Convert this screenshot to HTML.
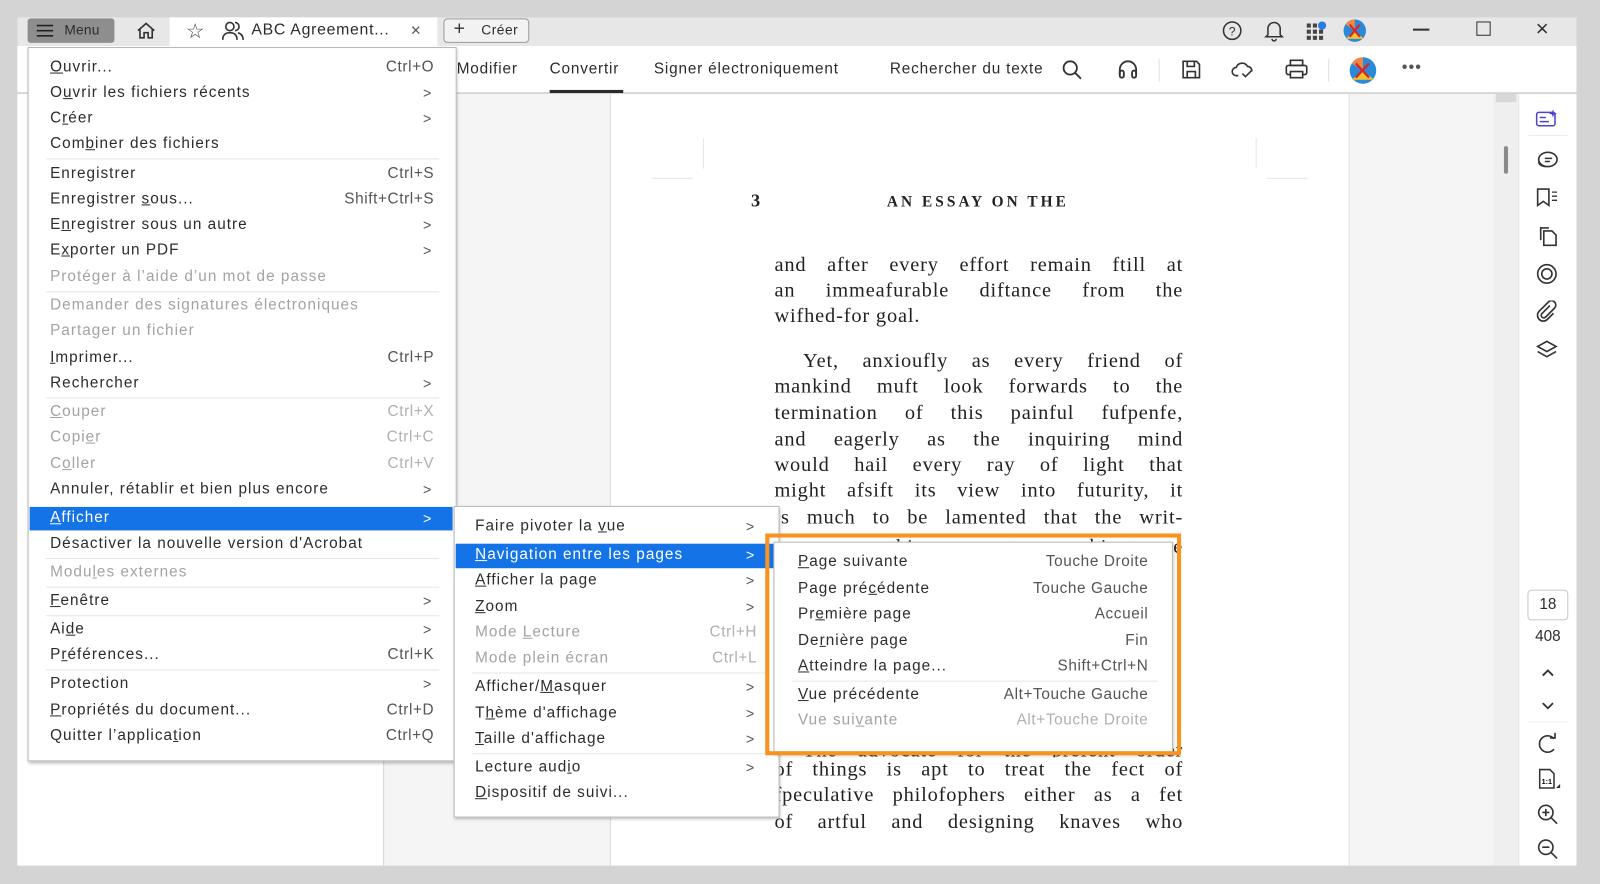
<!DOCTYPE html>
<html><head><meta charset="utf-8"><style>
*{margin:0;padding:0;box-sizing:border-box}
html,body{width:1600px;height:884px;overflow:hidden;background:#d4d4d4}
#c{position:absolute;left:0;top:0;width:1566px;height:865px;transform:scale(1.0217,1.022);transform-origin:0 0;font-family:"Liberation Sans",sans-serif;color:#2c2c2c}
.a{position:absolute}
.m{position:absolute;background:#fff;border:1px solid #b8b8b8;box-shadow:1px 2px 3px rgba(0,0,0,.25)}
.r{position:absolute;font-size:15px;line-height:20px;white-space:nowrap;letter-spacing:1px}
.d{color:#a3a3a3}
.k{position:absolute;font-size:15px;line-height:20px;white-space:nowrap;text-align:right;color:#555;letter-spacing:.6px}
.k.d{color:#b0b0b0}
.ch{position:absolute;font-size:14px;line-height:20px;color:#555}
.sep{position:absolute;height:1px;background:#e6e6e6}
.p{position:absolute;left:758px;width:400px;font-family:"Liberation Serif",serif;font-size:20px;line-height:25px;text-align:justify;text-align-last:justify;letter-spacing:.8px;color:#222;white-space:nowrap}
.ic{position:absolute}
.t{letter-spacing:.8px}
</style></head><body><div id="c">
<div class="a" style="left:17px;top:17px;width:1526px;height:28px;background:#e7e7e7"></div>
<div class="a" style="left:17px;top:45px;width:1526px;height:46px;background:#fff;border-bottom:1px solid #dcdcdc"></div>
<div class="a" style="left:17px;top:92px;width:358px;height:755px;background:#fff"></div>
<div class="a" style="left:375px;top:92px;width:223px;height:755px;background:#f5f5f5;border-left:1px solid #d8d8d8;border-right:1px solid #dedede"></div>
<div class="a" style="left:598px;top:92px;width:722px;height:755px;background:#fff"></div>
<div class="a" style="left:1320px;top:92px;width:142px;height:755px;background:#f5f5f5;border-left:1px solid #e2e2e2"></div>
<div class="a" style="left:1462px;top:92px;width:24px;height:755px;background:#efefef"></div>
<div class="a" style="left:1464px;top:92px;width:20px;height:8px;background:#d8d8d8"></div>
<div class="a" style="left:1472px;top:143px;width:4px;height:27px;background:#8a8a8a;border-radius:2px"></div>
<div class="a" style="left:1486px;top:92px;width:57px;height:755px;background:#fff;border-left:1px solid #e4e4e4"></div>

<div class="a" style="left:27px;top:18px;width:85px;height:24px;background:#8e8e8e;border-radius:3px"></div>
<svg class="ic" style="left:35px;top:22px" width="18" height="16"><path d="M1 3h16M1 8h16M1 13h16" stroke="#222" stroke-width="1.6"/></svg>
<div class="r" style="left:63px;top:20px;font-size:13.5px;letter-spacing:.2px">Menu</div>
<svg class="ic" style="left:132px;top:20px" width="22" height="20"><path d="M3 10L11 3l8 7M5 8v9h4v-5h4v5h4V8" fill="none" stroke="#333" stroke-width="1.6"/></svg>
<div class="a" style="left:166px;top:17px;width:262px;height:28px;background:#fff"></div>
<div class="a" style="left:182px;top:17px;font-size:20px;line-height:28px;color:#444">☆</div>
<svg class="ic" style="left:216px;top:20px" width="24" height="20"><circle cx="9" cy="6" r="4" fill="none" stroke="#333" stroke-width="1.6"/><path d="M2 19c0-5 3-7 7-7s7 2 7 7M14 2a4 4 0 010 8M17 12c3 1 5 3 5 7" fill="none" stroke="#333" stroke-width="1.6"/></svg>
<div class="r" style="left:246px;top:20px;font-size:15.5px;letter-spacing:.7px">ABC Agreement...</div>
<div class="a" style="left:402px;top:18px;font-size:17px;line-height:24px;color:#555">×</div>
<div class="a" style="left:434px;top:18px;width:84px;height:24px;border:1px solid #9a9a9a;border-radius:4px;background:#f2f2f2"></div>
<div class="a" style="left:444px;top:17px;font-size:19px;line-height:24px;color:#333">+</div>
<div class="r" style="left:471px;top:20px;font-size:13.5px;letter-spacing:.5px">Créer</div>
<svg class="ic" style="left:1196px;top:20px" width="20" height="20"><circle cx="10" cy="10" r="8.5" fill="none" stroke="#333" stroke-width="1.5"/><text x="10" y="14.5" font-size="12" text-anchor="middle" font-family="Liberation Sans" fill="#333">?</text></svg>
<svg class="ic" style="left:1237px;top:19px" width="20" height="22"><path d="M4 15V9a6 6 0 0112 0v6l2 2H2zM8 19a2 2 0 004 0" fill="none" stroke="#333" stroke-width="1.5"/></svg>
<svg class="ic" style="left:1278px;top:20px" width="22" height="20"><g fill="#444"><rect x="1" y="3" width="4" height="4"/><rect x="7" y="3" width="4" height="4"/><rect x="1" y="9" width="4" height="4"/><rect x="7" y="9" width="4" height="4"/><rect x="13" y="9" width="4" height="4"/><rect x="1" y="15" width="4" height="4"/><rect x="7" y="15" width="4" height="4"/><rect x="13" y="15" width="4" height="4"/></g><circle cx="16" cy="5" r="4" fill="#2a7be4"/></svg>
<svg class="ic" style="left:1314px;top:18px" width="24" height="24"><circle cx="12" cy="12" r="11" fill="#2a8ad8"/><path d="M12 1a11 11 0 00-9 5l9 6z" fill="#e84"/><path d="M3 20l9-8 9 8z" fill="#f3c22e"/><path d="M7 18l10-12M17 18L7 6" stroke="#d22" stroke-width="2"/></svg>
<div class="a" style="left:1383px;top:28px;width:16px;height:1.5px;background:#333"></div>
<div class="a" style="left:1445px;top:21px;width:14px;height:14px;border:1.5px solid #333"></div>
<div class="a" style="left:1503px;top:15px;font-size:22px;line-height:26px;color:#333">×</div>

<div class="r t" style="left:447px;top:58px">Modifier</div>
<div class="r t" style="left:538px;top:58px">Convertir</div>
<div class="a" style="left:538px;top:88px;width:72px;height:3px;background:#2c2c2c"></div>
<div class="r t" style="left:640px;top:58px">Signer électroniquement</div>
<div class="r t" style="left:871px;top:58px">Rechercher du texte</div>
<svg class="ic" style="left:1039px;top:58px" width="22" height="22"><circle cx="8.5" cy="8.5" r="6.5" fill="none" stroke="#333" stroke-width="1.8"/><path d="M13 13l6 6" stroke="#333" stroke-width="1.8"/></svg>
<svg class="ic" style="left:1093px;top:58px" width="22" height="20"><path d="M3 15V10a8 8 0 0116 0v5" fill="none" stroke="#333" stroke-width="1.8"/><rect x="3" y="11" width="4" height="7" rx="2" fill="none" stroke="#333" stroke-width="1.8"/><rect x="15" y="11" width="4" height="7" rx="2" fill="none" stroke="#333" stroke-width="1.8"/></svg>
<div class="a" style="left:1134px;top:58px;width:1px;height:22px;background:#ddd"></div>
<svg class="ic" style="left:1156px;top:58px" width="20" height="20"><path d="M2 2h13l3 3v13H2z" fill="none" stroke="#333" stroke-width="1.6"/><path d="M6 2v5h7V2M6 18v-6h8v6" fill="none" stroke="#333" stroke-width="1.6"/></svg>
<svg class="ic" style="left:1205px;top:58px" width="24" height="20"><path d="M7 16H5a4 4 0 010-8 6 6 0 0111-1 4 4 0 014 5" fill="none" stroke="#333" stroke-width="1.6"/><path d="M11 14l3 3 6-6" fill="none" stroke="#333" stroke-width="1.6"/></svg>
<svg class="ic" style="left:1257px;top:58px" width="24" height="20"><rect x="6" y="1" width="12" height="5" fill="none" stroke="#333" stroke-width="1.6"/><rect x="2" y="6" width="20" height="9" rx="2" fill="none" stroke="#333" stroke-width="1.6"/><rect x="6" y="12" width="12" height="6" fill="#fff" stroke="#333" stroke-width="1.6"/></svg>
<div class="a" style="left:1300px;top:58px;width:1px;height:22px;background:#ddd"></div>
<svg class="ic" style="left:1319px;top:55px" width="30" height="28"><circle cx="15" cy="14" r="13" fill="#2a8ad8"/><path d="M15 1a13 13 0 00-11 6l11 7z" fill="#e84"/><path d="M4 23l11-9 11 9z" fill="#f3c22e"/><path d="M8 21l13-14M21 21L8 7" stroke="#d22" stroke-width="2.2"/></svg>
<div class="a" style="left:1372px;top:58px;font-size:16px;letter-spacing:1px;color:#555">•••</div>

<svg class="ic" style="left:1503px;top:106px" width="24" height="20"><rect x="1" y="4" width="18" height="13" rx="2" fill="none" stroke="#4b44c9" stroke-width="1.5"/><path d="M4 9h6M4 13h9" stroke="#4b44c9" stroke-width="1.5"/><path d="M17 1l1 3 3 1-3 1-1 3-1-3-3-1 3-1z" fill="#4b44c9"/></svg>
<div class="a" style="left:1495px;top:132px;width:40px;height:1px;background:#eee"></div>
<svg class="ic" style="left:1503px;top:146px" width="24" height="20"><ellipse cx="12" cy="10" rx="9" ry="7" fill="none" stroke="#333" stroke-width="1.6"/><path d="M3 12c0 3 3 5 7 5M9 9h7M9 12h5" stroke="#333" stroke-width="1.5" fill="none"/></svg>
<svg class="ic" style="left:1503px;top:183px" width="24" height="20"><path d="M2 2h11v16l-5.5-4L2 18z" fill="none" stroke="#333" stroke-width="1.6"/><path d="M16 5h5M16 9h5M16 13h5" stroke="#333" stroke-width="1.3"/></svg>
<svg class="ic" style="left:1504px;top:220px" width="22" height="22"><path d="M4 15V3h8" fill="none" stroke="#333" stroke-width="1.6"/><path d="M7 6h8l4 4v10H7z" fill="none" stroke="#333" stroke-width="1.6"/></svg>
<svg class="ic" style="left:1503px;top:257px" width="22" height="22"><circle cx="11" cy="11" r="9" fill="none" stroke="#333" stroke-width="1.6"/><circle cx="11" cy="11" r="5" fill="none" stroke="#333" stroke-width="1.6"/></svg>
<svg class="ic" style="left:1503px;top:294px" width="22" height="22"><path d="M14 5l-8 8a2.5 2.5 0 003.5 3.5l9-9a4 4 0 00-6-6l-9 9a5.5 5.5 0 008 8l6-6" fill="none" stroke="#333" stroke-width="1.6"/></svg>
<svg class="ic" style="left:1503px;top:331px" width="22" height="22"><path d="M11 3l9 5-9 5-9-5z" fill="none" stroke="#333" stroke-width="1.6"/><path d="M2 13l9 5 9-5" fill="none" stroke="#333" stroke-width="1.6"/></svg>
<div class="a" style="left:1495px;top:577px;width:40px;height:30px;border:1px solid #c8c8c8;border-radius:4px;text-align:center;font-size:15px;line-height:28px">18</div>
<div class="a" style="left:1495px;top:614px;width:40px;text-align:center;font-size:15px">408</div>
<svg class="ic" style="left:1508px;top:653px" width="14" height="10"><path d="M2 8l5-5 5 5" fill="none" stroke="#333" stroke-width="1.8"/></svg>
<svg class="ic" style="left:1508px;top:686px" width="14" height="10"><path d="M2 2l5 5 5-5" fill="none" stroke="#333" stroke-width="1.8"/></svg>
<div class="a" style="left:1495px;top:706px;width:40px;height:1px;background:#eee"></div>
<svg class="ic" style="left:1504px;top:717px" width="22" height="22"><path d="M17 6a8 8 0 100 10" fill="none" stroke="#333" stroke-width="1.6"/><path d="M13 5h5V0" fill="none" stroke="#333" stroke-width="1.6"/></svg>
<svg class="ic" style="left:1504px;top:751px" width="24" height="24"><path d="M3 2h10l4 4v14H3z" fill="none" stroke="#333" stroke-width="1.5"/><text x="10" y="16" font-size="7" text-anchor="middle" font-family="Liberation Sans" font-weight="bold">1:1</text><path d="M19 20l4-4v4z" fill="#333"/></svg>
<svg class="ic" style="left:1504px;top:786px" width="22" height="22"><circle cx="9" cy="9" r="7" fill="none" stroke="#333" stroke-width="1.6"/><path d="M14 14l6 6M5.5 9h7M9 5.5v7" stroke="#333" stroke-width="1.6"/></svg>
<svg class="ic" style="left:1504px;top:820px" width="22" height="22"><circle cx="9" cy="9" r="7" fill="none" stroke="#333" stroke-width="1.6"/><path d="M14 14l6 6M5.5 9h7" stroke="#333" stroke-width="1.6"/></svg>

<div class="a" style="left:688px;top:135px;width:1px;height:30px;background:#e6e6e6"></div>
<div class="a" style="left:1229px;top:135px;width:1px;height:30px;background:#e6e6e6"></div>
<div class="a" style="left:638px;top:174px;width:40px;height:1px;background:#e6e6e6"></div>
<div class="a" style="left:1240px;top:174px;width:40px;height:1px;background:#e6e6e6"></div>
<div class="a" style="left:735px;top:186px;font-family:'Liberation Serif',serif;font-size:18px;font-weight:bold;color:#222">3</div>
<div class="a" style="left:868px;top:190px;font-family:'Liberation Serif',serif;font-size:15px;font-weight:bold;letter-spacing:3px;color:#222">AN ESSAY ON THE</div>
<div class="p" style="top:247px">and after every effort remain ftill at</div>
<div class="p" style="top:272px">an immeafurable diftance from the</div>
<div class="p" style="top:297px;text-align-last:left">wifhed-for goal.</div>
<div class="p" style="top:341px;padding-left:28px">Yet, anxioufly as every friend of</div>
<div class="p" style="top:366px">mankind muft look forwards to the</div>
<div class="p" style="top:392px">termination of this painful fufpenfe,</div>
<div class="p" style="top:418px">and eagerly as the inquiring mind</div>
<div class="p" style="top:443px">would hail every ray of light that</div>
<div class="p" style="top:468px">might afsift its view into futurity, it</div>
<div class="p" style="top:494px">is much to be lamented that the writ-</div>
<div class="p" style="top:523px">ers upon this momentous subject are</div>
<div class="p" style="top:722px;padding-left:28px">The advocate for the prefent order</div>
<div class="p" style="top:741px;background:#fff">of things is apt to treat the fect of</div>
<div class="p" style="top:766px">fpeculative philofophers either as a fet</div>
<div class="p" style="top:792px">of artful and designing knaves who</div>

<div class="m" style="left:27px;top:46px;width:420px;height:699px"></div>
<div class="a" style="left:29px;top:496px;width:414px;height:23px;background:#1473e6"></div>
<div class="r" style="left:49px;top:56px"><u>O</u>uvrir...</div><div class="k" style="right:1141px;top:56px">Ctrl+O</div>
<div class="r" style="left:49px;top:81px">O<u>u</u>vrir les fichiers récents</div><div class="ch" style="left:414px;top:81px">&gt;</div>
<div class="r" style="left:49px;top:106px">C<u>r</u>éer</div><div class="ch" style="left:414px;top:106px">&gt;</div>
<div class="r" style="left:49px;top:131px">Com<u>b</u>iner des fichiers</div>
<div class="sep" style="left:45px;top:155px;width:385px"></div>
<div class="r" style="left:49px;top:160px">Enregistrer</div><div class="k" style="right:1141px;top:160px">Ctrl+S</div>
<div class="r" style="left:49px;top:185px">Enregistrer <u>s</u>ous...</div><div class="k" style="right:1141px;top:185px">Shift+Ctrl+S</div>
<div class="r" style="left:49px;top:210px">E<u>n</u>registrer sous un autre</div><div class="ch" style="left:414px;top:210px">&gt;</div>
<div class="r" style="left:49px;top:235px">E<u>x</u>porter un PDF</div><div class="ch" style="left:414px;top:235px">&gt;</div>
<div class="r d" style="left:49px;top:261px">Protéger à l’aide d’un mot de passe</div>
<div class="sep" style="left:45px;top:285px;width:385px"></div>
<div class="r d" style="left:49px;top:289px">Demander des signatures électroniques</div>
<div class="r d" style="left:49px;top:314px">Partager un fichier</div>
<div class="r" style="left:49px;top:340px"><u>I</u>mprimer...</div><div class="k" style="right:1141px;top:340px">Ctrl+P</div>
<div class="r" style="left:49px;top:365px">Rechercher</div><div class="ch" style="left:414px;top:365px">&gt;</div>
<div class="sep" style="left:45px;top:389px;width:385px"></div>
<div class="r d" style="left:49px;top:393px"><u>C</u>ouper</div><div class="k d" style="right:1141px;top:393px">Ctrl+X</div>
<div class="r d" style="left:49px;top:418px">Copi<u>e</u>r</div><div class="k d" style="right:1141px;top:418px">Ctrl+C</div>
<div class="r d" style="left:49px;top:444px">C<u>o</u>ller</div><div class="k d" style="right:1141px;top:444px">Ctrl+V</div>
<div class="r" style="left:49px;top:469px">Annuler, rétablir et bien plus encore</div><div class="ch" style="left:414px;top:469px">&gt;</div>
<div class="r" style="left:49px;top:497px;color:#fff"><u>A</u>fficher</div><div class="ch" style="left:414px;top:497px;color:#fff">&gt;</div>
<div class="r" style="left:49px;top:522px">Désactiver la nouvelle version d'Acrobat</div>
<div class="sep" style="left:45px;top:546px;width:385px"></div>
<div class="r d" style="left:49px;top:550px">Modu<u>l</u>es externes</div>
<div class="sep" style="left:45px;top:574px;width:385px"></div>
<div class="r" style="left:49px;top:578px"><u>F</u>enêtre</div><div class="ch" style="left:414px;top:578px">&gt;</div>
<div class="sep" style="left:45px;top:602px;width:385px"></div>
<div class="r" style="left:49px;top:606px">Ai<u>d</u>e</div><div class="ch" style="left:414px;top:606px">&gt;</div>
<div class="r" style="left:49px;top:631px">P<u>r</u>éférences...</div><div class="k" style="right:1141px;top:631px">Ctrl+K</div>
<div class="sep" style="left:45px;top:655px;width:385px"></div>
<div class="r" style="left:49px;top:659px">Protection</div><div class="ch" style="left:414px;top:659px">&gt;</div>
<div class="r" style="left:49px;top:685px"><u>P</u>ropriétés du document...</div><div class="k" style="right:1141px;top:685px">Ctrl+D</div>
<div class="r" style="left:49px;top:710px">Quitter l’applica<u>t</u>ion</div><div class="k" style="right:1141px;top:710px">Ctrl+Q</div>

<div class="m" style="left:444px;top:495px;width:319px;height:305px"></div>
<div class="a" style="left:446px;top:532px;width:315px;height:24px;background:#1473e6"></div>
<div class="r" style="left:465px;top:505px">Faire pivoter la <u>v</u>ue</div><div class="ch" style="left:730px;top:505px">&gt;</div>
<div class="r" style="left:465px;top:533px;color:#fff"><u>N</u>avigation entre les pages</div><div class="ch" style="left:730px;top:533px;color:#fff">&gt;</div>
<div class="r" style="left:465px;top:558px"><u>A</u>fficher la page</div><div class="ch" style="left:730px;top:558px">&gt;</div>
<div class="r" style="left:465px;top:584px"><u>Z</u>oom</div><div class="ch" style="left:730px;top:584px">&gt;</div>
<div class="r d" style="left:465px;top:609px">Mode <u>L</u>ecture</div><div class="k d" style="right:825px;top:609px">Ctrl+H</div>
<div class="r d" style="left:465px;top:634px">Mode plein écran</div><div class="k d" style="right:825px;top:634px">Ctrl+L</div>
<div class="sep" style="left:462px;top:658px;width:290px"></div>
<div class="r" style="left:465px;top:662px">Afficher/<u>M</u>asquer</div><div class="ch" style="left:730px;top:662px">&gt;</div>
<div class="r" style="left:465px;top:688px">T<u>h</u>ème d'affichage</div><div class="ch" style="left:730px;top:688px">&gt;</div>
<div class="r" style="left:465px;top:713px"><u>T</u>aille d'affichage</div><div class="ch" style="left:730px;top:713px">&gt;</div>
<div class="sep" style="left:462px;top:737px;width:290px"></div>
<div class="r" style="left:465px;top:741px">Lecture aud<u>i</u>o</div><div class="ch" style="left:730px;top:741px">&gt;</div>
<div class="r" style="left:465px;top:766px"><u>D</u>ispositif de suivi...</div>

<div class="m" style="left:757px;top:530px;width:391px;height:207px"></div>
<div class="r" style="left:781px;top:540px"><u>P</u>age suivante</div><div class="k" style="right:442px;top:540px">Touche Droite</div>
<div class="r" style="left:781px;top:566px">Page pré<u>c</u>édente</div><div class="k" style="right:442px;top:566px">Touche Gauche</div>
<div class="r" style="left:781px;top:591px">Pr<u>e</u>mière page</div><div class="k" style="right:442px;top:591px">Accueil</div>
<div class="r" style="left:781px;top:617px">De<u>r</u>nière page</div><div class="k" style="right:442px;top:617px">Fin</div>
<div class="r" style="left:781px;top:642px"><u>A</u>tteindre la page...</div><div class="k" style="right:442px;top:642px">Shift+Ctrl+N</div>
<div class="sep" style="left:775px;top:666px;width:358px"></div>
<div class="r" style="left:781px;top:670px"><u>V</u>ue précédente</div><div class="k" style="right:442px;top:670px">Alt+Touche Gauche</div>
<div class="r d" style="left:781px;top:695px">Vue sui<u>v</u>ante</div><div class="k d" style="right:442px;top:695px">Alt+Touche Droite</div>
<div class="a" style="left:749px;top:522px;width:407px;height:217px;border:4px solid #f7931e"></div>
</div></body></html>
